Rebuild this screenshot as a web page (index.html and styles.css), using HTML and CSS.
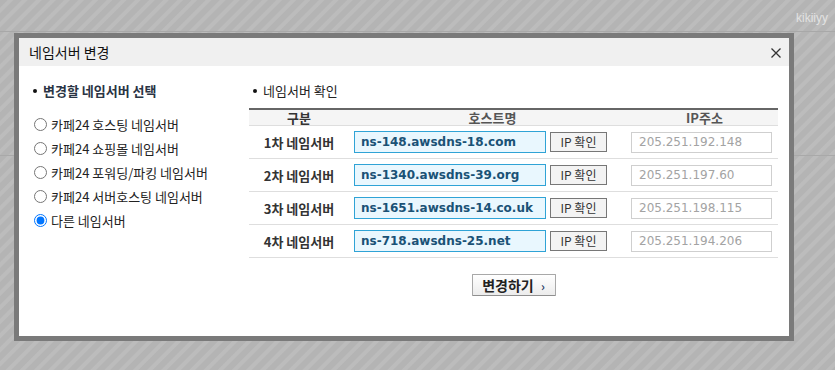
FILE: index.html
```html
<!DOCTYPE html>
<html>
    <head>
        <meta http-equiv="Content-Type" content="text/html; charset=utf-8" />
        <title>네임서버 변경</title>
        <link rel="stylesheet" href="styles.css">
    </head>
    <body>
        <div class="top_bar">
            <span class="user_id">kikiiyy</span>
        </div>
        <div class="page_box"></div>

        <!-- 네임서버 변경 팝업 -->
        <div class="layer_pop">
            <div class="pop_head">
                <h1>네임서버 변경</h1>
                <svg class="btn_close" width="10" height="10" viewBox="0 0 10 10">
                    <path d="M0.5 0.5 L9.5 9.5 M9.5 0.5 L0.5 9.5" stroke="#333" stroke-width="1.3" fill="none" />
                </svg>
            </div>
            <div class="pop_body">
                <div class="col_select">
                    <h2 class="tit_dot tit_bold">변경할 네임서버 선택</h2>
                    <form name="ns_form" class="ns_list">
                        <label><input type="radio" name="ns_type" value="1" />카페24 호스팅 네임서버</label>
                        <label><input type="radio" name="ns_type" value="2" />카페24 쇼핑몰 네임서버</label>
                        <label><input type="radio" name="ns_type" value="3" />카페24 포워딩/파킹 네임서버</label>
                        <label><input type="radio" name="ns_type" value="4" />카페24 서버호스팅 네임서버</label>
                        <label><input type="radio" name="ns_type" value="5" checked />다른 네임서버</label>
                    </form>
                </div>
                <div class="col_check">
                    <h2 class="tit_dot">네임서버 확인</h2>
                    <div class="ns_table">
                        <div class="ns_row ns_head">
                            <div class="c_name">구분</div>
                            <div class="c_host">호스트명</div>
                            <div class="c_ip">IP주소</div>
                        </div>
                        <div class="ns_row">
                            <div class="c_name">1차 네임서버</div>
                            <div class="c_host">
                                <input type="text" class="inp_host" value="ns-148.awsdns-18.com" />
                                <button type="button" class="btn_ip">IP 확인</button>
                            </div>
                            <div class="c_ip"><input type="text" class="inp_ip" value="205.251.192.148" readonly /></div>
                        </div>
                        <div class="ns_row">
                            <div class="c_name">2차 네임서버</div>
                            <div class="c_host">
                                <input type="text" class="inp_host" value="ns-1340.awsdns-39.org" />
                                <button type="button" class="btn_ip">IP 확인</button>
                            </div>
                            <div class="c_ip"><input type="text" class="inp_ip" value="205.251.197.60" readonly /></div>
                        </div>
                        <div class="ns_row">
                            <div class="c_name">3차 네임서버</div>
                            <div class="c_host">
                                <input type="text" class="inp_host" value="ns-1651.awsdns-14.co.uk" />
                                <button type="button" class="btn_ip">IP 확인</button>
                            </div>
                            <div class="c_ip"><input type="text" class="inp_ip" value="205.251.198.115" readonly /></div>
                        </div>
                        <div class="ns_row">
                            <div class="c_name">4차 네임서버</div>
                            <div class="c_host">
                                <input type="text" class="inp_host" value="ns-718.awsdns-25.net" />
                                <button type="button" class="btn_ip">IP 확인</button>
                            </div>
                            <div class="c_ip"><input type="text" class="inp_ip" value="205.251.194.206" readonly /></div>
                        </div>
                    </div>
                    <div class="btn_area">
                        <button type="button" class="btn_change">변경하기 <span class="arr">&#8250;</span></button>
                    </div>
                </div>
            </div>
        </div>
    </body>
</html>
```

FILE: styles.css
```css
html, body {
    height: 100%;
}
body {
    margin: 0;
    font-family: "Noto Sans CJK KR", "Noto Sans", sans-serif;
    background-color: #b4b4b4;
    background-image: repeating-linear-gradient(135deg, #b4b4b4 0px, #b4b4b4 5px, #bcbcbc 6px, #bcbcbc 9px, #b4b4b4 10px);
}
.top_bar {
    height: 31px;
    border-bottom: 1px solid #a8a8a8;
    display: flex;
    justify-content: flex-end;
    align-items: center;
    padding-right: 7px;
}
.user_id {
    font-family: "Liberation Sans", Arial, sans-serif;
    font-size: 12px;
    color: #e2e2e2;
    margin-top: 4px;
}
.page_box {
    margin-top: 123px;
    border-top: 1px solid #a9a9a9;
}
.layer_pop {
    position: absolute;
    left: 14px;
    top: 33px;
    width: 770px;
    height: 298px;
    border: 5px solid #7a7a7a;
    background: #fff;
}
.pop_head {
    height: 28px;
    background: #f0f0f0;
    display: flex;
    align-items: center;
    justify-content: space-between;
    padding: 0 8px 0 10px;
}
.pop_head h1 {
    margin: 0;
    font-size: 14px;
    font-weight: normal;
    color: #111;
    line-height: 28px;
}
.btn_close {
    margin-top: 1px;
}
.pop_body {
    display: grid;
    grid-template-columns: 230px 529px;
    padding-top: 16px;
}
.tit_dot {
    margin: 0 0 8px 0;
    font-size: 13px;
    font-weight: normal;
    line-height: 18px;
    color: #222;
    display: flex;
    align-items: center;
}
.tit_dot::before {
    content: "";
    width: 4px;
    height: 4px;
    border-radius: 50%;
    background: #111;
    margin: 0 6px 0 4px;
}
.tit_bold {
    font-size: 13px;
    font-weight: bold;
    color: #2a3444;
}
.col_select {
    padding-left: 10px;
}
.col_select .tit_dot {
    margin-bottom: 12px;
}
.ns_list label {
    display: flex;
    align-items: center;
    height: 24px;
    font-size: 13px;
    color: #222;
}
.ns_list input {
    width: 13px;
    height: 13px;
    margin: 0 4px 0 5px;
}
.ns_table {
    border-top: 2px solid #666;
}
.ns_row {
    display: flex;
    align-items: center;
    height: 32px;
    border-bottom: 1px solid #dedede;
}
.ns_head {
    height: 15px;
    background: #f5f5f5;
    font-weight: bold;
    color: #555;
    font-size: 13px;
}
.ns_head .c_host {
    justify-content: center;
}
.ns_head .c_ip {
    justify-content: center;
}
.c_name {
    width: 100px;
    text-align: center;
    font-size: 13px;
    font-weight: bold;
    color: #333;
}
.c_host {
    width: 282px;
    display: flex;
    align-items: center;
    padding-left: 5px;
    box-sizing: border-box;
}
.c_ip {
    width: 147px;
    display: flex;
    align-items: center;
}
.inp_host {
    width: 192px;
    height: 22px;
    box-sizing: border-box;
    border: 1px solid #2fa3d6;
    background: #e9f7fe;
    padding: 0 0 0 6px;
    font-family: "DejaVu Sans", Verdana, sans-serif;
    font-size: 12px;
    font-weight: bold;
    color: #1a5276;
    outline: none;
}
.btn_ip {
    margin-left: 4px;
    width: 57px;
    height: 20px;
    border: 1px solid #777;
    background: #f3f3f3;
    font-family: "Noto Sans CJK KR", sans-serif;
    font-size: 12px;
    color: #333;
    padding: 0;
    line-height: 18px;
}
.inp_ip {
    width: 141px;
    height: 21px;
    box-sizing: border-box;
    border: 1px solid #cfcfcf;
    background: #fff;
    padding: 0 0 0 7px;
    font-family: "DejaVu Sans", Verdana, sans-serif;
    font-size: 12px;
    color: #a3a3a3;
    outline: none;
}
.btn_area {
    display: flex;
    justify-content: center;
    margin-top: 16px;
}
.btn_change {
    width: 84px;
    height: 22px;
    border: 1px solid #a8a8a8;
    border-bottom-color: #8f8f8f;
    border-radius: 1px;
    background: linear-gradient(#ffffff, #ececec);
    font-family: "Noto Sans CJK KR", sans-serif;
    font-size: 14px;
    font-weight: bold;
    color: #222;
    padding: 0;
    line-height: 20px;
}
.btn_change .arr {
    font-size: 12px;
    color: #2b4068;
    margin-left: 4px;
}
```
